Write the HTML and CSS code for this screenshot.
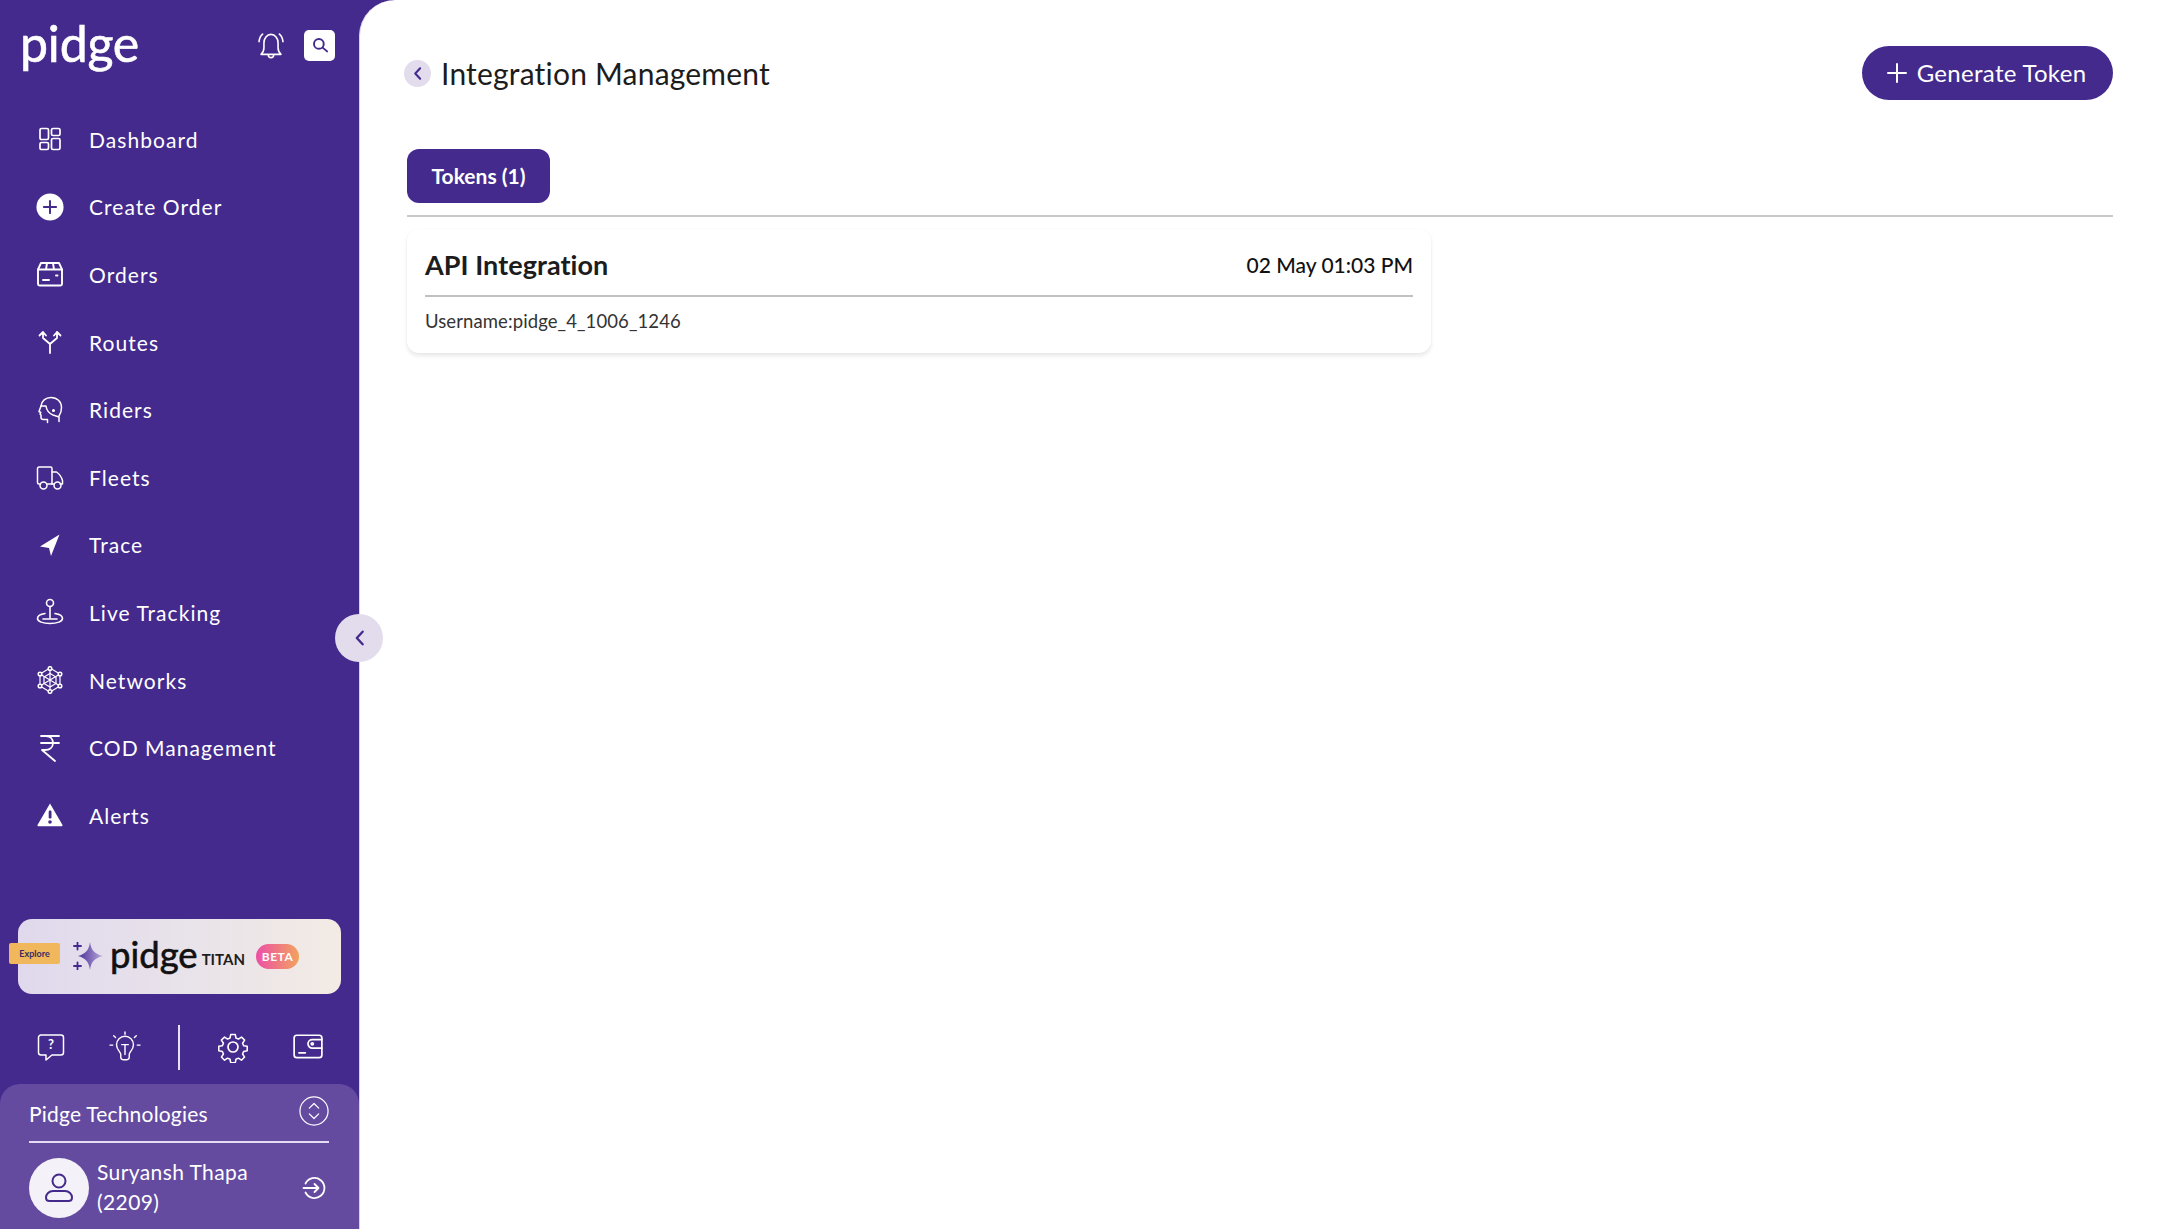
FILE: index.html
```html
<!DOCTYPE html>
<html lang="en">
<head>
<meta charset="utf-8">
<title>Integration Management</title>
<link rel="stylesheet" href="styles.css">
</head>
<body>
<div class="app">
  <aside class="sidebar">
    <header class="brand">
      <span class="logo">pidge</span>
      <div class="brand-tools">
        <svg class="bell" viewBox="0 0 24 24" fill="none" stroke="#fff" stroke-width="1.200" stroke-linecap="round" stroke-linejoin="round"><path d="M4.500 19h15c-1.500-1.300-2.200-2.800-2.200-5v-3.500c0-3.300-2.200-6.500-5.300-6.500S6.700 7.200 6.700 10.500V14c0 2.200-.7 3.700-2.200 5z"/><path d="M10 19.500c0 1.300.8 2 2 2s2-.7 2-2"/><path d="M3 9.500C3.300 7 4.200 5 5.700 3.800M21 9.500C20.700 7 19.800 5 18.300 3.800"/></svg>
        <span class="search-box"><svg viewBox="0 0 24 24" fill="none" stroke="#442a8d" stroke-width="2.600" stroke-linecap="round"><circle cx="10.500" cy="10.500" r="6.500"/><path d="M15.500 15.500l6 5"/></svg></span>
      </div>
    </header>
    <nav class="nav">
      <a class="nav-item"><span class="nav-icon"><svg viewBox="0 0 24 24" fill="none" stroke="#fff" stroke-width="1.700" stroke-linejoin="round"><rect x="2" y="1.500" width="8.500" height="11" rx="1.500"/><rect x="13.500" y="1.500" width="8.500" height="7" rx="1.500"/><rect x="2" y="15.500" width="8.500" height="7" rx="1.500"/><rect x="13.500" y="11.500" width="8.500" height="11" rx="1.500"/></svg></span>Dashboard</a>
      <a class="nav-item"><span class="nav-icon"><svg class="big" viewBox="0 0 32 32"><circle cx="16" cy="16" r="15.500" fill="#fff"/><path d="M16 9v14M9 16h14" stroke="#442a8d" stroke-width="2.200" stroke-linecap="round"/></svg></span>Create Order</a>
      <a class="nav-item"><span class="nav-icon"><svg class="big" viewBox="0 0 28 28" fill="none" stroke="#fff" stroke-width="1.900" stroke-linecap="round" stroke-linejoin="round"><path d="M2 9.500l3-6.500h18l3 6.500V24a1.500 1.500 0 0 1-1.500 1.500h-21A1.500 1.500 0 0 1 2 24z"/><path d="M2 9.500h24M11 3l-1 6.500M17 3l1 6.500"/><path d="M7 20h6M20 15.500h1.500"/></svg></span>Orders</a>
      <a class="nav-item"><span class="nav-icon"><svg viewBox="0 0 24 24" fill="none" stroke="#fff" stroke-width="1.800" stroke-linecap="round" stroke-linejoin="round"><path d="M12 23v-9M12 14L5 8V2M12 14l7-6V2M1.500 5.500L5 2l3 3.500M16 5.500L19 2l3.500 3.500"/></svg></span>Routes</a>
      <a class="nav-item"><span class="nav-icon"><svg class="big" viewBox="0 0 28 28" fill="none" stroke="#fff" stroke-width="1.500" stroke-linecap="round" stroke-linejoin="round"><path d="M5 10c.5-5 4.500-8.500 10-8.500 6 0 10.500 4 10.500 10 0 3.500-.8 6-2.500 8.500"/><path d="M5 10h5c.5 4 3.500 7.500 7 9l6 2v4.500M5 10l-2 5.500 1.800 1-.8 1.500 1 1v2.500c0 1.300 1 2 2.500 2h4v3"/><circle cx="17.500" cy="14.500" r=".8" fill="#fff"/></svg></span>Riders</a>
      <a class="nav-item"><span class="nav-icon"><svg class="big" viewBox="0 0 28 28" fill="none" stroke="#fff" stroke-width="1.500" stroke-linecap="round" stroke-linejoin="round"><path d="M4.500 21H3a1.500 1.500 0 0 1-1.500-1.500V5.500A1.500 1.500 0 0 1 3 4h11.500A1.500 1.500 0 0 1 16 5.500V21h-5"/><path d="M16 9h4.500c3 2 5 5 6 8.500V21h-2.500M16 21h2"/><circle cx="7.500" cy="22.500" r="3.500"/><circle cx="21.500" cy="22.500" r="3.500"/></svg></span>Fleets</a>
      <a class="nav-item"><span class="nav-icon"><svg viewBox="0 0 24 24" fill="#fff"><path d="M21.500 1.500L2 13.500l9 1.500 2 8z"/></svg></span>Trace</a>
      <a class="nav-item"><span class="nav-icon"><svg class="big" viewBox="0 0 28 28" fill="none" stroke="#fff" stroke-width="1.600" stroke-linecap="round"><circle cx="14" cy="5" r="3.500"/><path d="M14 8.500V20"/><path d="M9 15.500c-4.500.7-7.500 2.500-7.500 5 0 3 5.500 5 12.500 5s12.500-2 12.500-5c0-2.500-3-4.300-7.500-5"/><path d="M7 21h14"/></svg></span>Live Tracking</a>
      <a class="nav-item"><span class="nav-icon"><svg class="big" viewBox="0 0 28 28" fill="none" stroke="#fff" stroke-width="1.200"><path d="M14 2l10 6v12l-10 6-10-6V8z"/><path d="M14 2v24M4 8l20 12M24 8L4 20"/><path d="M14 7.500l6 3.500v6.500l-6 3.500-6-3.500V11z"/><g fill="#442a8d" stroke-width="1.500"><circle cx="14" cy="2.500" r="1.800"/><circle cx="14" cy="25.500" r="1.800"/><circle cx="4" cy="8" r="1.800"/><circle cx="24" cy="8" r="1.800"/><circle cx="4" cy="20" r="1.800"/><circle cx="24" cy="20" r="1.800"/></g></svg></span>Networks</a>
      <a class="nav-item"><span class="nav-icon"><svg class="big" viewBox="0 0 28 28" fill="none" stroke="#fff" stroke-width="1.800" stroke-linecap="round" stroke-linejoin="round"><path d="M5 2h18M5 9h18M10 2c4.500 0 7 3 7 7s-3 7-8 7H6l13 11"/></svg></span>COD Management</a>
      <a class="nav-item"><span class="nav-icon"><svg class="big" viewBox="0 0 28 28"><path d="M14 2.500L26.500 24a.8.8 0 0 1-.7 1.200H2.200a.8.8 0 0 1-.7-1.200z" fill="#fff"/><rect x="12.700" y="9.500" width="2.800" height="8" rx="1.200" fill="#442a8d"/><circle cx="14" cy="21" r="1.800" fill="#442a8d"/></svg></span>Alerts</a>
    </nav>
    <section class="titan">
      <span class="explore">Explore</span>
      <svg class="sparkle" viewBox="0 0 30 28"><defs><linearGradient id="spark" x1="0" x2="1"><stop offset="0" stop-color="#4a2f96"/><stop offset="1" stop-color="#b9a9dc"/></linearGradient></defs><path d="M17 0c1 8 4.500 12 13 14-8.500 2-12 6-13 14-1-8-4.500-12-12-14 7.500-2 11-6 12-14z" fill="url(#spark)"/><path d="M4.500 0.500v7M1 4h7M4.500 20.500v7M1 24h7" stroke="#442a8d" stroke-width="1.800" stroke-linecap="round"/></svg>
      <span class="titan-logo">pidge</span>
      <span class="titan-word">TITAN</span>
      <span class="beta">BETA</span>
    </section>
    <div class="tools">
      <svg viewBox="0 0 28 28" fill="none" stroke="#fff" stroke-width="1.500" stroke-linejoin="round"><path d="M4 2h20a2.500 2.500 0 0 1 2.500 2.500v15A2.500 2.500 0 0 1 24 22H15l-6 5v-5H4a2.500 2.500 0 0 1-2.500-2.500v-15A2.500 2.500 0 0 1 4 2z"/><text x="14" y="16" class="tool-q">?</text></svg>
      <svg class="tool-wide" viewBox="0 0 34 34" fill="none" stroke="#fff" stroke-width="1.500" stroke-linecap="round" stroke-linejoin="round"><path d="M12.500 25c0-3-4.500-5-4.500-10.500a9 9 0 0 1 18 0C26 20 21.500 22 21.500 25v3a2.500 2.500 0 0 1-2.500 2.500h-4a2.500 2.500 0 0 1-2.500-2.500z"/><path d="M13.500 14.500h7M17 14.500V25"/><path d="M17 1v2.500M5 5l2 2M29 5l-2 2M1 15h3M30 15h3"/></svg>
      <span class="tool-sep"></span>
      <svg class="tool-wide" viewBox="0 0 32 32" fill="none" stroke="#fff" stroke-width="1.700" stroke-linejoin="round"><circle cx="16" cy="16" r="5"/><path d="M13.500 2h5l.8 4 2.700 1.200 3.400-2.300 3.500 3.500-2.300 3.400 1.200 2.700 4 .8v5l-4 .8-1.200 2.700 2.300 3.400-3.500 3.500-3.400-2.300-2.700 1.200-.8 4h-5l-.8-4-2.700-1.200-3.400 2.300-3.500-3.500 2.300-3.400-1.200-2.700-4-.8v-5l4-.8 1.200-2.700-2.300-3.400 3.500-3.500 3.400 2.300 2.700-1.200z" transform="translate(1.600 1.600) scale(.9)"/></svg>
      <svg class="tool-wide" viewBox="0 0 30 26" fill="none" stroke="#fff" stroke-width="1.600" stroke-linecap="round" stroke-linejoin="round"><rect x="2" y="2" width="26" height="21" rx="2.500"/><path d="M28 6h-9a3.500 3.500 0 0 0 0 8h9"/><circle cx="19" cy="10" r="1"/><path d="M6.500 18.500h6"/></svg>
    </div>
    <footer class="account">
      <div class="org">
        <span class="org-name">Pidge Technologies</span>
        <svg class="org-switch" viewBox="0 0 32 32" fill="none" stroke="#fff" stroke-width="1.300" stroke-linecap="round" stroke-linejoin="round"><circle cx="16" cy="16" r="15"/><path d="M11 13l5-5 5 5M11 19l5 5 5-5"/></svg>
      </div>
      <div class="user">
        <span class="avatar"><svg viewBox="0 0 28 32" fill="none" stroke="#442a8d" stroke-width="2" stroke-linejoin="round"><circle cx="14" cy="9" r="6.500"/><path d="M8 19h12c4 0 7 3 7 6.500 0 2-1.500 3.500-3.500 3.500h-19C2.500 29 1 27.500 1 25.500 1 22 4 19 8 19z"/></svg></span>
        <span class="user-text"><span>Suryansh Thapa</span><span>(2209)</span></span>
        <svg class="logout" viewBox="0 0 24 24" fill="none" stroke="#fff" stroke-width="1.800" stroke-linecap="round" stroke-linejoin="round"><path d="M3.500 7.500a10 10 0 1 1 0 9"/><path d="M1.500 12h15M12.500 8l4 4-4 4"/></svg>
      </div>
    </footer>
  </aside>
  <button class="collapse"><svg viewBox="0 0 12 20" fill="none" stroke="#442a8d" stroke-width="2.600" stroke-linecap="round" stroke-linejoin="round"><path d="M9.500 3L3 10l6.500 7"/></svg></button>
  <main class="main">
    <header class="page-head">
      <div class="page-title">
        <span class="back"><svg viewBox="0 0 12 20" fill="none" stroke="#442a8d" stroke-width="2.800" stroke-linecap="round" stroke-linejoin="round"><path d="M9.500 3L3 10l6.500 7"/></svg></span>
        <h1>Integration Management</h1>
      </div>
      <button class="generate"><svg viewBox="0 0 20 20" fill="none" stroke="#fff" stroke-width="2" stroke-linecap="round"><path d="M10 1v18M1 10h18"/></svg><span class="generate-label">Generate Token</span></button>
    </header>
    <div class="tabs"><button class="tab"><span class="tab-label">Tokens (1)</span></button></div>
    <article class="card">
      <div class="card-head">
        <h2>API Integration</h2>
        <span class="date">02 May 01:03 PM</span>
      </div>
      <p class="username">Username:pidge_4_1006_1246</p>
    </article>
  </main>
</div>
</body>
</html>
```
FILE: styles.css
```css
* { box-sizing: border-box; }
html, body { margin: 0; padding: 0; height: 100%; }
body {
  font-family: "Lato", "Liberation Sans", sans-serif;
  background: #442a8d;
  overflow: hidden;
}
.app { position: relative; display: flex; width: 2160px; height: 1229px; background: #442a8d; }

.sidebar { width: 359px; flex: none; display: flex; flex-direction: column; color: #fff; }
.brand { height: 106px; flex: none; display: flex; align-items: flex-start; justify-content: space-between; padding: 12px 24px 0 20px; }
.logo { font-size: 50px; line-height: 62px; letter-spacing: -.2px; font-weight: 400; -webkit-text-stroke: .6px #fff; }
.brand-tools { display: flex; align-items: center; gap: 17px; margin-top: 17px; }
.bell { width: 32px; height: 32px; }
.search-box { width: 31px; height: 31px; border-radius: 5px; background: #fff; display: flex; align-items: center; justify-content: center; }
.search-box svg { width: 18px; height: 18px; }

.nav { display: flex; flex-direction: column; }
.nav-item { height: 67.6px; display: flex; align-items: center; padding-bottom: 1px; font-size: 21px; letter-spacing: 1.050px; color: #fff; }
.nav-icon { width: 89px; flex: none; padding: 0 25px 0 36px; display: flex; justify-content: center; }
.nav-icon svg { width: 24px; height: 24px; }
.nav-icon svg.big { width: 28px; height: 28px; flex: none; }

.titan { margin: auto 18px 0; height: 75px; flex: none; position: relative; display: flex; align-items: center; border-radius: 14px; padding-left: 55px; background: linear-gradient(90deg, #e0d9ed 0%, #e9e3ea 55%, #f3ebe4 100%); }
.explore { position: absolute; left: -9px; top: 24px; width: 51px; height: 21px; display: flex; align-items: center; justify-content: center; background: #f0b75c; border-radius: 2px; color: #3b2d63; font-size: 9px; font-weight: 700; }
.sparkle { width: 30px; height: 28px; flex: none; margin-top: -2px; }
.titan-logo { margin-left: 7px; margin-top: -5px; font-size: 36.500px; line-height: 48px; color: #111; font-weight: 400; -webkit-text-stroke: .6px #111; }
.titan-word { margin-left: 4px; margin-top: 4px; font-size: 15px; font-weight: 700; color: #1d1d1d; }
.beta { margin-left: 11px; width: 43px; height: 25px; border-radius: 13px; display: flex; align-items: center; justify-content: center; font-size: 12px; font-weight: 700; letter-spacing: .5px; color: #fff; background: linear-gradient(90deg, #ec4fa6, #f2a35f); }

.tools { height: 90px; flex: none; display: grid; grid-template-columns: 74px 74px 34px 74px 76px; justify-items: center; align-items: center; padding: 16px 0 0 14px; }
.tools svg { width: 28px; height: 28px; }
.tools svg.tool-wide { width: 32px; height: 32px; }
.tool-q { fill: #fff; stroke: none; font-size: 13px; font-weight: 700; text-anchor: middle; }
.tool-sep { width: 2px; height: 45px; background: #e6e0f3; }

.account { height: 145px; flex: none; background: #644ba0; border-radius: 20px 20px 0 0; padding: 0 30px 0 29px; }
.org { height: 59px; display: flex; align-items: center; justify-content: space-between; border-bottom: 2px solid #e3dcf2; padding-top: 1px; }
.org-name { font-size: 21px; letter-spacing: .2px; }
.org-switch { width: 30px; height: 30px; margin-top: -4px; }
.user { height: 86px; display: flex; align-items: center; }
.avatar { width: 60px; height: 60px; border-radius: 50%; background: #f4f2f8; display: flex; align-items: center; justify-content: center; flex: none; margin-top: 4px; }
.avatar svg { width: 28px; height: 32px; }
.user-text { margin-left: 8px; flex: 1; display: flex; flex-direction: column; font-size: 21px; line-height: 30px; letter-spacing: .4px; margin-top: 2px; }
.logout { width: 24px; height: 24px; margin-right: 3px; margin-top: 4px; }

.collapse { position: absolute; left: 335px; top: 614px; width: 48px; height: 48px; border: 0; padding: 0; border-radius: 50%; background: #e2dcec; display: flex; align-items: center; justify-content: center; z-index: 2; }
.collapse svg { width: 11px; height: 18px; }

.main { flex: 1; min-width: 0; background: #fff; border-top-left-radius: 36px; border-left: 1px solid #d9d0ef; padding: 46px 47px 0 47px; }
.page-head { display: flex; align-items: center; justify-content: space-between; height: 54px; }
.page-title { display: flex; align-items: center; gap: 10px; margin-left: -3px; }
.back { width: 27px; height: 27px; border-radius: 50%; background: #e2dcec; display: flex; align-items: center; justify-content: center; }
.back svg { width: 9px; height: 15px; }
h1 { margin: 0; font-size: 30px; line-height: 40px; font-weight: 400; color: #1c1c1c; letter-spacing: .2px; }
.generate { width: 251px; height: 54px; border: 0; border-radius: 27px; background: #442a8d; color: #fff; display: flex; align-items: center; justify-content: center; gap: 10px; padding: 0 2px 0 0; font: 400 24px "Lato", sans-serif; letter-spacing: .3px; }
.generate-label { margin-top: -2px; }
.generate svg { width: 20px; height: 20px; }

.tabs { margin-top: 49px; padding-bottom: 12px; border-bottom: 2px solid #c9c6c6; }
.tab { display: block; width: 143px; height: 54px; border: 0; padding: 0 0 2px; border-radius: 12px; background: #442a8d; color: #fff; font: 700 21px "Lato", sans-serif; }

.card { width: 1024px; height: 124px; margin-top: 12px; padding: 0 18px; background: #fff; border-radius: 12px; box-shadow: 0 3px 4px rgba(0,0,0,.09), 0 0 2px rgba(0,0,0,.04); }
.card-head { height: 68px; display: flex; align-items: center; justify-content: space-between; border-bottom: 2px solid #c2c0c0; padding-top: 5px; }
h2 { margin: 0; font-size: 27px; font-weight: 700; color: #1c1c1c; letter-spacing: .05px; }
.date { font-size: 21px; font-weight: 500; color: #111; letter-spacing: 0; }
.username { margin: 12px 0 0; font-size: 18.500px; line-height: 24px; color: #333; letter-spacing: .1px; }
```
